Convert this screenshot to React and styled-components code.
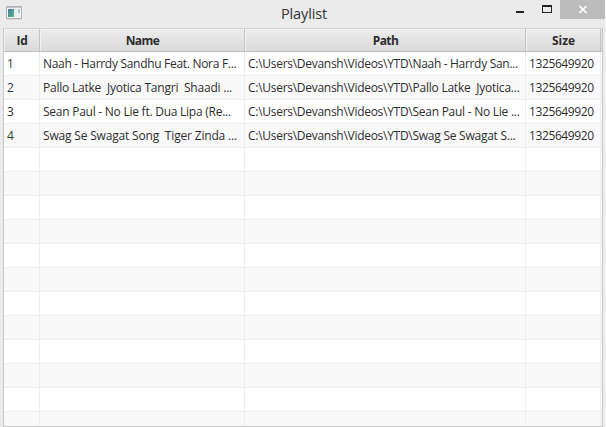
import React from 'react';
import styled, { createGlobalStyle } from 'styled-components';

const GlobalStyle = createGlobalStyle`
  * { box-sizing: border-box; }
  body { margin: 0; background: #ebebeb; overflow: hidden; }
`;

const Window = styled.div`
  display: flex;
  flex-direction: column;
  width: 606px;
  height: 427px;
  padding: 0 1px 0 3px;
  background: #ebebeb;
  border-right: 1px solid #f6f6f6;
  color: #2d2d2d;
  font: 12px 'Open Sans', sans-serif;
`;

const TitleBar = styled.header`
  display: grid;
  grid-template-columns: 120px 1fr 101px;
  flex: 0 0 28px;
  margin-right: -1px;
`;

const AppIcon = styled.svg`
  width: 16px;
  height: 14px;
  margin: 6px 0 0 3px;
`;

const Title = styled.h1`
  margin: 0 0 0 -19px;
  text-align: center;
  font-size: 14.5px;
  font-weight: 400;
  line-height: 27px;
  letter-spacing: -0.13px;
  color: #333;
`;

const WindowControls = styled.div`
  display: grid;
  grid-template-columns: 29px 27px 45px;
  height: 19px;
`;

const ControlButton = styled.button`
  display: flex;
  padding: 0;
  border: 0;
  background: ${(p) => (p.$close ? '#bcbcbc' : 'transparent')};
`;

const ControlGlyph = styled.svg`
  width: 100%;
  height: 19px;
`;

const Table = styled.section`
  display: flex;
  flex-direction: column;
  width: 600px;
  height: 399px;
  border: 1px solid #c8c8c8;
  border-top-color: #d2d2d2;
  overflow: hidden;
`;

const columns = '36px 205px 281px 75px 1fr';

const HeaderRow = styled.div`
  display: grid;
  grid-template-columns: ${columns};
  grid-template-rows: 22px;
  flex: 0 0 23px;
  border-bottom: 1px solid #bdbdbd;
  background: linear-gradient(#ededed, #dadada);
`;

const HeaderCell = styled.div`
  padding-left: 1px;
  border-right: 1px solid #c3c3c3;
  box-shadow: inset 1px 1px 0 #f3f3f3;
  text-align: center;
  font-weight: 700;
  line-height: 23px;
  letter-spacing: ${(p) => p.$spacing}px;
`;

const Row = styled.div`
  display: grid;
  grid-template-columns: ${columns};
  flex: 0 0 24px;
  border-bottom: 1px solid #ededed;
  background: ${(p) => (p.$striped ? '#f9f9f9' : '#fff')};
`;

const Cell = styled.div`
  padding-left: 3px;
  border-right: 1px solid #ededed;
  white-space: pre;
  line-height: 23px;
  letter-spacing: ${(p) => p.$spacing || 0}px;
  color: ${(p) => p.$tint || '#2d2d2d'};
`;

const PathRoot = styled.span`
  letter-spacing: -0.28px;
`;

const headings = [
  ['Id', -0.2],
  ['Name', -0.55],
  ['Path', -0.55],
  ['Size', 0],
];

const tracks = [
  { id: 1, name: 'Naah - Harrdy Sandhu Feat. Nora F...', path: 'Naah - Harrdy San...', gaps: [-0.3, -0.32], tint: '#3d342c' },
  { id: 2, name: 'Pallo Latke  Jyotica Tangri  Shaadi ...', path: 'Pallo Latke  Jyotica...', gaps: [-0.22, -0.23], tint: '#2c374c' },
  { id: 3, name: 'Sean Paul - No Lie ft. Dua Lipa (Re...', path: 'Sean Paul - No Lie ...', gaps: [-0.25, -0.26], tint: '#2d2d2d' },
  { id: 4, name: 'Swag Se Swagat Song  Tiger Zinda ...', path: 'Swag Se Swagat S...', gaps: [-0.18, -0.25], tint: '#2c4230' },
];

const rows = Array.from({ length: 16 }, (_, i) => tracks[i] || null);

export default function App() {
  return (
    <>
      <GlobalStyle />
      <Window>
        <TitleBar>
          <AppIcon viewBox="0 0 16 14">
            <defs>
              <linearGradient id="pane" x1="0" y1="0" x2="1" y2="1">
                <stop offset="0" stopColor="#4779a5" />
                <stop offset="1" stopColor="#58b889" />
              </linearGradient>
            </defs>
            <path d="M.5.5h15v12H.5z" fill="#f5f5f5" stroke="#aeb2b6" />
            <path d="M1 1.5h14" stroke="#bfc5ca" />
            <path d="M2 3h6v8H2z" fill="url(#pane)" />
            <path d="M9 3h2v8H9z" fill="#e5e9e9" />
            <path d="M12 3h2v4h-2z" fill="#a9c6d4" />
            <path d="M12 7h2v4h-2z" fill="#e5eee9" />
            <path d="M0 13.5h16" stroke="#d8d8d8" />
          </AppIcon>
          <Title>Playlist</Title>
          <WindowControls>
            <ControlButton aria-label="Minimize">
              <ControlGlyph viewBox="0 0 29 19"><path d="M12 11h8v2h-8z" fill="#222" /></ControlGlyph>
            </ControlButton>
            <ControlButton aria-label="Maximize">
              <ControlGlyph viewBox="0 0 27 19"><path fillRule="evenodd" d="M9 5h10v8H9zM10 7v5h8V7z" fill="#222" /></ControlGlyph>
            </ControlButton>
            <ControlButton $close aria-label="Close">
              <ControlGlyph viewBox="0 0 45 19"><path d="M19.5 6l7 7M26.5 6l-7 7" stroke="#fff" strokeWidth="1.7" /></ControlGlyph>
            </ControlButton>
          </WindowControls>
        </TitleBar>
        <Table>
          <HeaderRow>
            {headings.map(([label, spacing]) => (
              <HeaderCell key={label} $spacing={spacing}>{label}</HeaderCell>
            ))}
          </HeaderRow>
          {rows.map((track, i) => (
            <Row key={i} $striped={i % 2 === 1}>
              <Cell $tint={track?.tint}>{track?.id}</Cell>
              <Cell $spacing={track?.gaps[0]}>{track?.name}</Cell>
              <Cell $spacing={track?.gaps[1]}>
                {track && <PathRoot>{'C:\\Users\\Devansh\\Videos\\YTD\\'}</PathRoot>}
                {track?.path}
              </Cell>
              <Cell $spacing={-0.39}>{track && '1325649920'}</Cell>
            </Row>
          ))}
        </Table>
      </Window>
    </>
  );
}
